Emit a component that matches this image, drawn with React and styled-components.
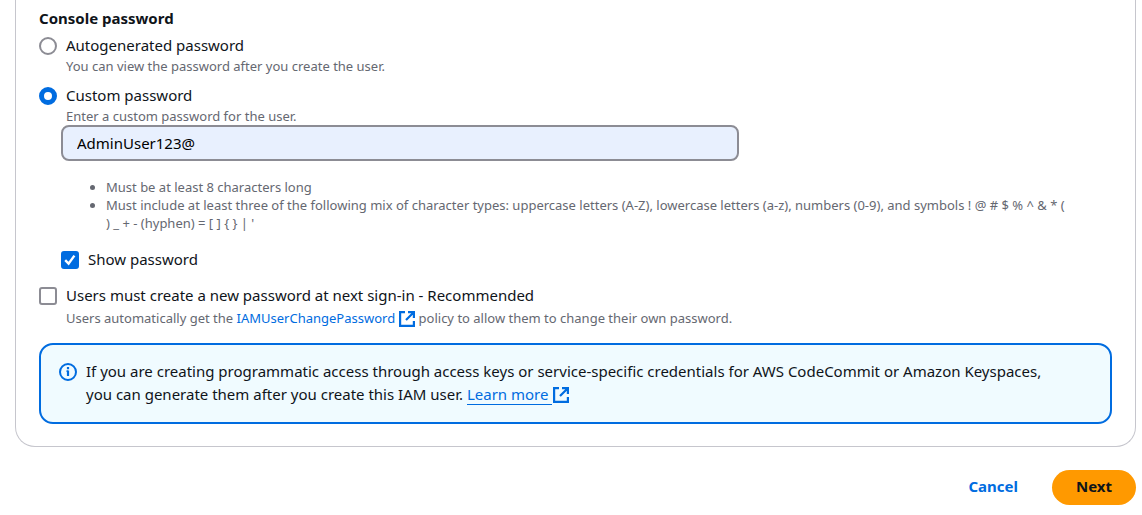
import React, { useState } from "react";
import styled, { createGlobalStyle } from "styled-components";

const GlobalStyle = createGlobalStyle`
  *, *::before, *::after { box-sizing: border-box; }
  body {
    margin: 0;
    background: #fff;
    color: #0f141a;
    font-family: "Noto Sans", "Open Sans", sans-serif;
    font-size: 15px;
    line-height: 22px;
  }
`;

const Page = styled.div`
  padding: 0 6px 10px 15px;
`;

const Card = styled.main`
  padding: 7px 23px 22px;
  border: 1px solid #c6c6cd;
  border-top: 0;
  border-radius: 0 0 20px 20px;
`;

const Fieldset = styled.fieldset`
  margin: 0;
  padding: 0;
  border: 0;
  min-width: 0;
`;

const Legend = styled.legend`
  padding: 0;
  margin-bottom: 6px;
  font-size: 15px;
  font-weight: 700;
`;

const Choice = styled.div`
  display: grid;
  grid-template-columns: 18px minmax(0, 1fr);
  column-gap: 9px;
  row-gap: ${(p) => p.$gap || 0}px;
  align-items: center;
  margin-bottom: ${(p) => p.$after || 0}px;
`;

const Radio = styled.input.attrs({ type: "radio" })`
  appearance: none;
  width: 18px;
  height: 18px;
  margin: 0;
  border: 2px solid #8c8c94;
  border-radius: 50%;
  background: #fff;
  &:checked {
    border: 5px solid #006ce0;
  }
`;

const CheckWrap = styled.span`
  display: grid;
  width: 18px;
  height: 18px;
  > * {
    grid-area: 1 / 1;
  }
  svg {
    pointer-events: none;
    visibility: hidden;
  }
  input:checked + svg {
    visibility: visible;
  }
`;

const Check = styled.input.attrs({ type: "checkbox" })`
  appearance: none;
  width: 18px;
  height: 18px;
  margin: 0;
  border: 2px solid #8c8c94;
  border-radius: 3px;
  background: #fff;
  &:checked {
    border-color: #006ce0;
    background: #006ce0;
  }
`;

const Label = styled.label`
  justify-self: start;
  padding-bottom: 2px;
  line-height: 20px;
`;

const Hint = styled.p`
  grid-column: 2;
  margin: 0;
  color: #656871;
  font-size: 13px;
  line-height: 18px;
`;

const Nested = styled.div`
  padding-left: 22px;
`;

const PasswordInput = styled.input`
  display: block;
  width: 100%;
  max-width: 678px;
  height: 36px;
  padding: 0 14px;
  border: 2px solid #8c8c94;
  border-radius: 8px;
  background: #e8f0fe;
  color: #000;
  font: inherit;
`;

const Rules = styled.ul`
  margin: 17px 0;
  padding: 0 42px 0 45px;
  color: #656871;
  font-size: 13px;
  line-height: 18px;
`;

const Link = styled.a`
  color: #006ce0;
  text-decoration: none;
  white-space: nowrap;
  svg {
    margin-left: ${(p) => (p.$underlined ? 1 : 4)}px;
    vertical-align: ${(p) => (p.$underlined ? "-3px" : "-4px")};
  }
`;

const Underlined = styled.span`
  padding-right: 4px;
  border-bottom: 1px solid #006ce0;
`;

const Alert = styled.section`
  display: flex;
  gap: 9px;
  margin-top: 16px;
  padding: 15px 18px 16px;
  border: 2px solid #006ce0;
  border-radius: 14px;
  background: #f0fbff;
  line-height: 23px;
  > svg {
    flex: none;
    margin-top: 3px;
  }
`;

const AlertText = styled.p`
  margin: 0;
  max-width: 980px;
`;

const Actions = styled.footer`
  display: flex;
  justify-content: flex-end;
  align-items: center;
  gap: 10px;
  margin-top: 23px;
`;

const Button = styled.button`
  height: 35px;
  padding: 0 24px 3px;
  border: 0;
  border-radius: 18px;
  background: ${(p) => (p.$primary ? "#ff9900" : "transparent")};
  color: ${(p) => (p.$primary ? "#0f141a" : "#006ce0")};
  font: inherit;
  font-weight: 700;
  cursor: pointer;
`;

function ExternalIcon() {
  return (
    <svg width="16" height="16" viewBox="0 0 16 16" fill="none" stroke="currentColor" strokeWidth="2.2" aria-hidden="true">
      <path d="M6 1.1H1.1v13.8h13.8V10" />
      <path d="M9 1.1h5.9V7M14.8 1.2L7 9" />
    </svg>
  );
}

function InfoIcon() {
  return (
    <svg width="18" height="18" viewBox="0 0 18 18" fill="none" stroke="#006ce0" strokeWidth="2" aria-hidden="true">
      <circle cx="9" cy="9" r="8" />
      <path d="M9 4v2.2M9 7.5V13" strokeWidth="2.2" />
      <path d="M7.4 8.1H9" strokeWidth="1.2" />
    </svg>
  );
}

function Checkbox(props) {
  return (
    <CheckWrap>
      <Check {...props} />
      <svg width="18" height="18" viewBox="0 0 18 18" fill="none" stroke="#fff" strokeWidth="2.4" aria-hidden="true">
        <path d="M4.2 9.2l3.4 3.4 5.8-8" />
      </svg>
    </CheckWrap>
  );
}

export default function App() {
  const [mode, setMode] = useState("custom");
  const [password, setPassword] = useState("AdminUser123@");
  const [shown, setShown] = useState(true);
  const [reset, setReset] = useState(false);

  return (
    <>
      <GlobalStyle />
      <Page>
        <Card>
          <Fieldset>
            <Legend>Console password</Legend>
            <Choice $after={10}>
              <Radio id="auto" name="mode" checked={mode === "auto"} onChange={() => setMode("auto")} />
              <Label htmlFor="auto">Autogenerated password</Label>
              <Hint>You can view the password after you create the user.</Hint>
            </Choice>
            <Choice>
              <Radio id="custom" name="mode" checked={mode === "custom"} onChange={() => setMode("custom")} />
              <Label htmlFor="custom">Custom password</Label>
              <Hint id="custom-hint">Enter a custom password for the user.</Hint>
            </Choice>
          </Fieldset>
          <Nested>
            <PasswordInput
              type={shown ? "text" : "password"}
              aria-label="Custom password"
              aria-describedby="custom-hint"
              value={password}
              onChange={(e) => setPassword(e.target.value)}
            />
            <Rules>
              <li>Must be at least 8 characters long</li>
              <li>
                {"Must include at least three of the following mix of character types: uppercase letters (A-Z), lowercase letters (a-z), numbers (0-9), and symbols ! @ # $ % ^ & * ( ) _ + - (hyphen) = [ ] { } | '"}
              </li>
            </Rules>
            <Choice $after={14}>
              <Checkbox id="show" checked={shown} onChange={(e) => setShown(e.target.checked)} />
              <Label htmlFor="show">Show password</Label>
            </Choice>
          </Nested>
          <Choice $gap={2}>
            <Checkbox id="reset" checked={reset} onChange={(e) => setReset(e.target.checked)} />
            <Label htmlFor="reset">Users must create a new password at next sign-in - Recommended</Label>
            <Hint>
              Users automatically get the{" "}
              <Link href="#policy">
                IAMUserChangePassword
                <ExternalIcon />
              </Link>{" "}
              policy to allow them to change their own password.
            </Hint>
          </Choice>
          <Alert>
            <InfoIcon />
            <AlertText>
              If you are creating programmatic access through access keys or service-specific credentials for AWS
              CodeCommit or Amazon Keyspaces, you can generate them after you create this IAM user.{" "}
              <Link href="#learn" $underlined>
                <Underlined>Learn more</Underlined>
                <ExternalIcon />
              </Link>
            </AlertText>
          </Alert>
        </Card>
        <Actions>
          <Button type="button">Cancel</Button>
          <Button type="button" $primary>
            Next
          </Button>
        </Actions>
      </Page>
    </>
  );
}
